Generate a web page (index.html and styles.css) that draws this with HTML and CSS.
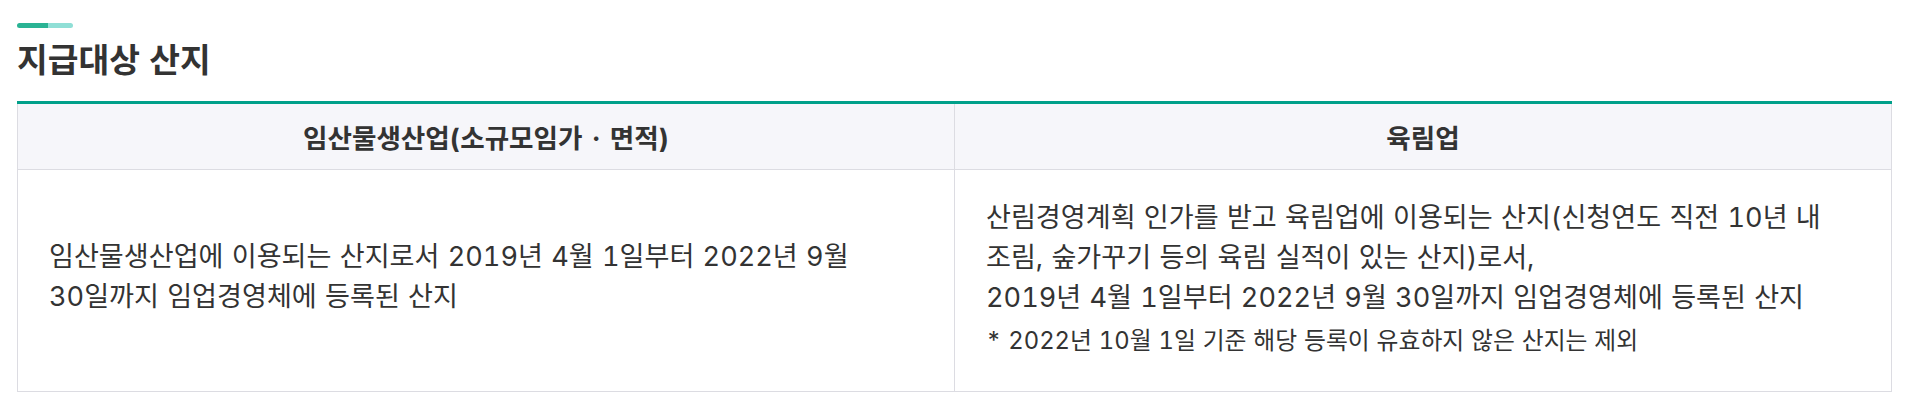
FILE: index.html
```html
<!DOCTYPE html>
<html lang="ko">
<head>
<meta charset="utf-8">
<title>지급대상 산지</title>
<link rel="stylesheet" href="styles.css">
</head>
<body>
<section class="section">
  <div class="accent"><span class="accent-dark"></span><span class="accent-light"></span></div>
  <h2 class="title">지급대상 산지</h2>
  <table class="info-table">
    <thead>
      <tr>
        <th>임산물생산업(소규모임가 · 면적)</th>
        <th>육림업</th>
      </tr>
    </thead>
    <tbody>
      <tr>
        <td class="cell-left">임산물생산업에 이용되는 산지로서 2019년 4월 1일부터 2022년 9월<br>30일까지 임업경영체에 등록된 산지</td>
        <td class="cell-right">산림경영계획 인가를 받고 육림업에 이용되는 산지(신청연도 직전 10년 내<br>조림, 숲가꾸기 등의 육림 실적이 있는 산지)로서,<br>2019년 4월 1일부터 2022년 9월 30일까지 임업경영체에 등록된 산지
          <p class="note">* 2022년 10월 1일 기준 해당 등록이 유효하지 않은 산지는 제외</p>
        </td>
      </tr>
    </tbody>
  </table>
</section>
</body>
</html>
```
FILE: styles.css
```css
* { box-sizing: border-box; }
html, body { margin: 0; padding: 0; background: #fff; }
body {
  font-family: Inter, "Noto Sans CJK KR", "Noto Sans", sans-serif;
  font-variant-numeric: tabular-nums;
  color: #333;
}
.section {
  padding: 23px 23px 0 17px;
}
.accent {
  display: flex;
  width: 56px;
  height: 5px;
  border-radius: 3px;
  overflow: hidden;
}
.accent-dark { flex: 0 0 31px; background: #2ab394; }
.accent-light { flex: 1; background: #90dfd6; }
.title {
  margin: 5px 0 0;
  font-family: "Noto Sans CJK KR", sans-serif;
  font-size: 33.4px;
  font-weight: 700;
  line-height: 50px;
  color: #333;
}
.info-table {
  margin-top: 18px;
  width: 100%;
  border-collapse: collapse;
  table-layout: fixed;
  border-top: 3px solid #00a08a;
}
.info-table th {
  background: #f6f6fa;
  height: 67px;
  font-size: 26.6px;
  font-weight: 700;
  word-spacing: 2px;
  color: #333;
  border: 1px solid #dcdce2;
  border-top: none;
  text-align: center;
  vertical-align: middle;
}
.info-table td {
  border: 1px solid #dcdce2;
  padding: 28px 31px 32px;
  font-size: 27.1px;
  line-height: 40px;
  word-spacing: 1px;
  vertical-align: middle;
  color: #333;
}
.info-table td.cell-left {
  padding-bottom: 35px;
}
.note {
  margin: 5px 0 0;
  font-size: 23.8px;
  line-height: 36px;
  word-spacing: 0.5px;
}
```
